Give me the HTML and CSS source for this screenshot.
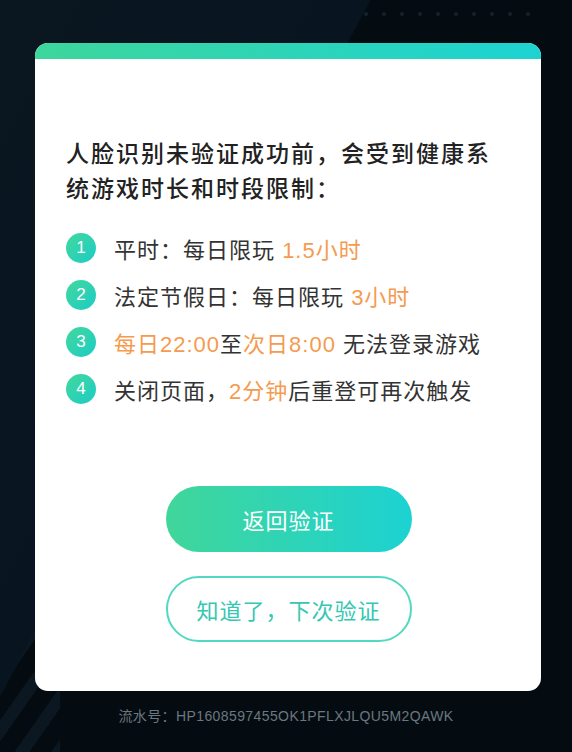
FILE: index.html
```html
<!DOCTYPE html>
<html lang="zh-CN">
<head>
<meta charset="utf-8">
<title>健康系统</title>
<link rel="stylesheet" href="styles.css">
</head>
<body>
<div class="page">
  <div class="dots">
    <span></span><span></span><span></span><span></span><span></span><span></span><span></span><span></span><span></span><span></span>
  </div>
  <div class="card">
    <div class="card-bar"></div>
    <div class="card-body">
      <p class="title">人脸识别未验证成功前，会受到健康系统游戏时长和时段限制：</p>
      <ul class="rules">
        <li><span class="num">1</span><span class="txt">平时：每日限玩 <em>1.5小时</em></span></li>
        <li><span class="num">2</span><span class="txt">法定节假日：每日限玩 <em>3小时</em></span></li>
        <li><span class="num">3</span><span class="txt"><em>每日22:00</em>至<em>次日8:00</em> 无法登录游戏</span></li>
        <li><span class="num">4</span><span class="txt">关闭页面，<em>2分钟</em>后重登可再次触发</span></li>
      </ul>
      <div class="actions">
        <button class="btn btn-primary">返回验证</button>
        <button class="btn btn-outline">知道了，下次验证</button>
      </div>
    </div>
  </div>
  <p class="serial">流水号：HP1608597455OK1PFLXJLQU5M2QAWK</p>
</div>
</body>
</html>
```
FILE: styles.css
```css
* { box-sizing: border-box; }
html, body { margin: 0; padding: 0; }
body {
  width: 572px;
  height: 752px;
  overflow: hidden;
  background: #040c12;
  font-family: "Noto Sans CJK SC", "Noto Sans", sans-serif;
}
.page {
  position: relative;
  width: 572px;
  height: 752px;
  display: flex;
  flex-direction: column;
  align-items: center;
  padding-top: 43px;
  background:
    linear-gradient(118deg, #0a1721 0%, #081520 38%, rgba(4,12,18,0) 38.2%),
    repeating-linear-gradient(125deg, rgba(20,36,50,0) 0 18px, rgba(20,36,50,0.45) 18px 30px),
    #040c12;
  background-size: 100% 100%, 60px 300px, 100% 100%;
  background-position: 0 0, 0 480px, 0 0;
  background-repeat: no-repeat;
}
.dots {
  position: absolute;
  top: 12px;
  left: 364px;
  display: flex;
  gap: 14px;
}
.dots span {
  width: 4px;
  height: 4px;
  border-radius: 50%;
  background: #16222b;
}
.card {
  width: 506px;
  margin-left: 4px;
  background: #fff;
  border-radius: 13px;
  overflow: hidden;
}
.card-bar {
  height: 16px;
  background: linear-gradient(90deg, #3dd69c, #1dd3d2);
}
.card-body {
  padding: 76px 30px 49px 31px;
}
.title {
  margin: 0;
  font-size: 23px;
  letter-spacing: 2px;
  line-height: 35px;
  font-weight: 500;
  color: #222;
}
.rules {
  list-style: none;
  margin: 19px 0 0;
  padding: 0;
}
.rules li {
  display: flex;
  align-items: center;
  height: 47px;
}
.num {
  flex: none;
  width: 30px;
  height: 30px;
  border-radius: 50%;
  background: linear-gradient(135deg, #43d89c, #1cccc6);
  color: #fff;
  font-family: "Liberation Sans", sans-serif;
  font-size: 17px;
  display: flex;
  align-items: center;
  justify-content: center;
}
.txt {
  margin-left: 18px;
  font-family: "Liberation Sans", "Noto Sans CJK SC", sans-serif;
  font-size: 22px;
  letter-spacing: 1px;
  color: #333;
}
.txt em {
  font-style: normal;
  color: #f59b4f;
}
.actions {
  display: flex;
  flex-direction: column;
  align-items: center;
  gap: 24px;
  margin-top: 74px;
}
.btn {
  width: 246px;
  height: 66px;
  border-radius: 33px;
  font-family: "Noto Sans CJK SC", sans-serif;
  font-size: 22px;
  letter-spacing: 1px;
  cursor: pointer;
}
.btn-primary {
  border: none;
  background: linear-gradient(90deg, #41d69a, #1cd2d2);
  color: #fff;
}
.btn-outline {
  border: 2px solid #52d9c1;
  background: #fff;
  color: #35c7b2;
}
.serial {
  margin: 16px 0 0;
  font-family: "Liberation Sans", "Noto Sans CJK SC", sans-serif;
  font-size: 14px;
  line-height: 18px;
  color: #6c777f;
  letter-spacing: 0.4px;
}
```
